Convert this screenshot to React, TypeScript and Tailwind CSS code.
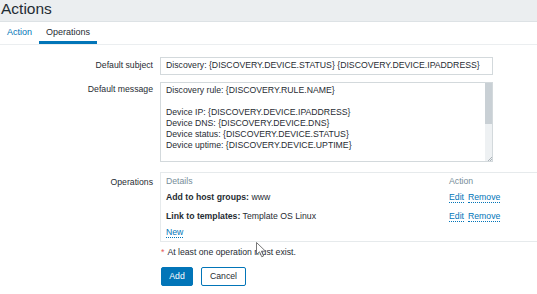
import React from 'react';

const messageLines = [
  'Discovery rule: {DISCOVERY.RULE.NAME}',
  '',
  'Device IP: {DISCOVERY.DEVICE.IPADDRESS}',
  'Device DNS: {DISCOVERY.DEVICE.DNS}',
  'Device status: {DISCOVERY.DEVICE.STATUS}',
  'Device uptime: {DISCOVERY.DEVICE.UPTIME}',
  '',
  'Device service name: {DISCOVERY.SERVICE.NAME}',
];

const operations = [
  { label: 'Add to host groups:', value: 'www' },
  { label: 'Link to templates:', value: 'Template OS Linux' },
];

const DottedLink: React.FC<{ children: React.ReactNode }> = ({ children }) => (
  <span className="text-[#0275b8] border-b border-dotted border-[#0275b8] leading-[10px]">{children}</span>
);

const App: React.FC = () => {
  return (
    <div
      className="relative w-[537px] h-[294px] overflow-hidden bg-white text-[8.7px] text-[#1f2c33]"
      style={{ fontFamily: '"Liberation Sans", Arial, sans-serif' }}
    >
      {/* header */}
      <div className="h-[22px] bg-[#ebeef0] border-b border-[#dde2e5]">
        <h1 className="text-[15.5px] leading-[17px] pl-[1px] text-[#1f2c33]">Actions</h1>
      </div>

      {/* tabs */}
      <div className="flex h-[23px] border-b border-[#ebeef0] text-[9px]">
        <div className="px-[7px] flex items-center text-[#0275b8]">Action</div>
        <div className="px-[7px] flex items-center border-b-[3px] border-[#0275b8] pt-[3px]">Operations</div>
      </div>

      {/* form */}
      <div className="flex flex-col pt-[12px]">
        <div className="flex gap-[7px] items-center">
          <div className="w-[153px] shrink-0 text-right">Default subject</div>
          <div className="w-[333px] shrink-0 h-[18px] border border-[#d3d9dc] pl-[5px] flex items-center whitespace-nowrap overflow-hidden">
            Discovery: {'{DISCOVERY.DEVICE.STATUS}'} {'{DISCOVERY.DEVICE.IPADDRESS}'}
          </div>
        </div>

        <div className="flex gap-[7px] mt-[7px]">
          <div className="w-[153px] shrink-0 text-right pt-[2px] leading-[11px]">Default message</div>
          <div className="w-[333px] shrink-0 h-[80px] border border-[#d3d9dc] flex overflow-hidden">
            <div className="flex-1 pl-[5px] pt-[2px] leading-[11px] whitespace-nowrap overflow-hidden">
              {messageLines.map((line, i) => (
                <div key={i} className="h-[11px]">{line}</div>
              ))}
            </div>
            <div className="w-[7px] flex flex-col bg-[#eef1f3]">
              <div className="h-[41px] bg-[#c9d0d5]" />
              <div className="flex-1" />
              <div className="h-[6px] flex items-end justify-end text-[#9aa5ab]">
                <svg width="5" height="5" viewBox="0 0 5 5">
                  <path d="M1 5 L5 1 M3 5 L5 3" stroke="currentColor" strokeWidth="0.8" />
                </svg>
              </div>
            </div>
          </div>
        </div>

        <div className="flex gap-[7px] mt-[10px]">
          <div className="w-[153px] shrink-0 text-right pt-[4px]">Operations</div>
          <div className="w-[420px] shrink-0 h-[70px] border border-[#e6eaec] pl-[5px] pt-[3px]">
            <div className="flex text-[#768d99] h-[12px] items-center">
              <div className="w-[283px]">Details</div>
              <div>Action</div>
            </div>
            {operations.map((op) => (
              <div key={op.label} className="flex items-center h-[19px]">
                <div className="w-[283px] whitespace-nowrap">
                  <span className="font-bold">{op.label}</span> {op.value}
                </div>
                <div className="flex gap-[4px]">
                  <DottedLink>Edit</DottedLink>
                  <DottedLink>Remove</DottedLink>
                </div>
              </div>
            ))}
            <div className="h-[12px] flex items-center">
              <DottedLink>New</DottedLink>
            </div>
          </div>
        </div>

        <div className="pl-[161px] mt-[5px] h-[12px] flex items-center">
          <span className="text-[#e45959] mr-[3px]">*</span>At least one operation must exist.
        </div>

        <div className="pl-[161px] mt-[8px] flex gap-[8px]">
          <button className="h-[19px] w-[32px] bg-[#0275b8] text-white rounded-[2px] border border-[#0275b8]">Add</button>
          <button className="h-[19px] w-[45px] bg-white text-[#1f2c33] rounded-[2px] border border-[#0275b8]">Cancel</button>
        </div>
      </div>

      {/* mouse pointer */}
      <svg className="absolute left-[256px] top-[242px]" width="11" height="16" viewBox="0 0 11 16">
        <path d="M0.5 0.5 L0.5 12.5 L3.5 9.8 L5.8 14.8 L7.6 14 L5.4 9.2 L9.5 9.2 Z" fill="white" stroke="#555" strokeWidth="0.8" />
      </svg>
    </div>
  );
};

export default App;
